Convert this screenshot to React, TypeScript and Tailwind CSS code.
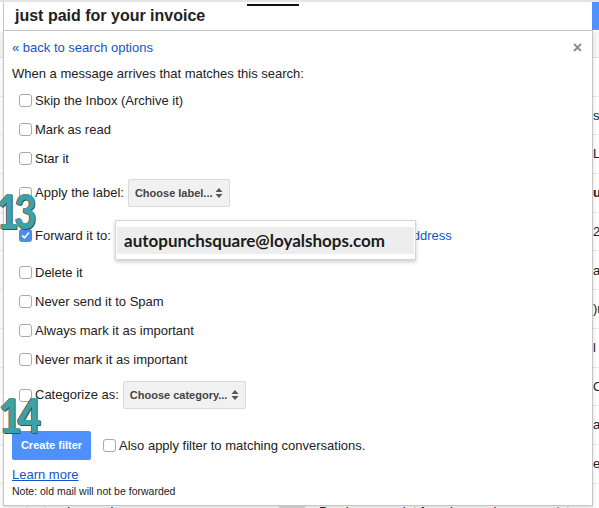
import React from "react";

const Box = ({ checked }: { checked?: boolean }) =>
  checked ? (
    <span className="w-[13px] h-[13px] rounded-[3px] bg-[#4a8fe7] flex items-center justify-center shrink-0">
      <svg width="9" height="9" viewBox="0 0 9 9">
        <path d="M1.5 4.8 L3.6 6.8 L7.6 2" stroke="#fff" strokeWidth="1.6" fill="none" strokeLinecap="round" strokeLinejoin="round" />
      </svg>
    </span>
  ) : (
    <span className="block w-[13px] h-[13px] rounded-[3px] border border-[#a9a9a9] bg-white shrink-0" />
  );

const Arrows = () => (
  <svg width="8" height="12" viewBox="0 0 8 12" className="shrink-0">
    <path d="M4 1 L7.5 5 L0.5 5 Z" fill="#555" />
    <path d="M4 11 L7.5 7 L0.5 7 Z" fill="#555" />
  </svg>
);

const Select = ({ label, w }: { label: string; w: string }) => (
  <div className={`h-[28px] ${w} bg-[#f1f1f1] border border-[#d9d9d9] rounded-[2px] flex items-center justify-between pl-[6px] pr-[6px] text-[11px] font-bold text-[#444]`}>
    <span>{label}</span>
    <Arrows />
  </div>
);

const Row = ({ text, h, checked, children }: { text: string; h: string; checked?: boolean; children?: React.ReactNode }) => (
  <div className={`${h} flex items-center pl-[7px]`}>
    <Box checked={checked} />
    <span className="ml-[3px] text-[13px] text-[#222]">{text}</span>
    {children}
  </div>
);

const bgRows = ["", "sc", "L", "ul", "2(", "a", ")r", "l", "O", "a", "e"];

export default function App() {
  return (
    <div className="relative w-[599px] h-[508px] overflow-hidden bg-white text-[#222] [font-family:'Liberation_Sans',Arial,sans-serif]">
      {/* search bar */}
      <div className="flex h-[31px] border-t-2 border-[#e4e4e4]">
        <div className="ml-[3px] flex-1 border-l border-b border-[#c8c8c8] flex items-center pl-[11px] text-[16px] font-bold text-[#222]">
          just paid for your invoice
        </div>
        <div className="w-[7px] h-[28px] bg-[#4d90fe]" />
      </div>
      {/* background list */}
      <div className="flex flex-col">
        <div className="h-[27px] bg-[#f7f7f7] border-b border-[#e0e0e0]" />
        {bgRows.map((t, i) => (
          <div key={i} className={`h-[38.7px] border-b border-[#e8e8e8] flex items-center pl-[593px] text-[13px] ${t === "ul" ? "font-bold" : ""} whitespace-nowrap`}>
            {t}
          </div>
        ))}
        <div className="h-[38px] flex items-start text-[13px] leading-[16px] whitespace-nowrap">
          <span className="w-[26px]" />
          <span className="w-[20px] h-[38px] border-l border-r border-[#e0e0e0]" />
          <span className="ml-[21px] w-[212px] pt-[20px]">Lazaro Lazaro</span>
          <span className="mt-[20px] w-[26px] h-[14px] bg-[#ddd]" />
          <span className="ml-[14px] pt-[20px]">Purchase receipt from Lazaro Lazaro</span>
          <span className="ml-[13px] pt-[20px] text-[#777]">misty</span>
        </div>
      </div>

      {/* dialog */}
      <div className="absolute left-[3px] top-[30px] w-[590px] h-[476px] bg-white border border-[#c6c6c6] shadow-[0_2px_4px_rgba(0,0,0,0.15)] pl-[8px] pr-[10px]">
        <div className="flex justify-between items-center h-[30px] pt-[3px]">
          <a className="text-[13px] text-[#15c]">« back to search options</a>
          <span className="text-[16px] font-bold text-[#888] mr-[0px]">×</span>
        </div>
        <div className="h-[25px] flex items-center text-[13px]">When a message arrives that matches this search:</div>
        <Row text="Skip the Inbox (Archive it)" h="h-[29px]" />
        <Row text="Mark as read" h="h-[29px]" />
        <Row text="Star it" h="h-[29px]" />
        <Row text="Apply the label:" h="h-[40px]">
          <div className="ml-[4px]">
            <Select label="Choose label..." w="w-[102px]" />
          </div>
        </Row>
        <Row text="Forward it to:" h="h-[45px]" checked>
          <div className="ml-[5px] h-[24px] w-[195px] border border-[#4d90fe] rounded-[2px] bg-[#f1f1f1]" />
          <a className="ml-[5px] text-[13px] text-[#15c]">add forwarding address</a>
        </Row>
        <Row text="Delete it" h="h-[29px]" />
        <Row text="Never send it to Spam" h="h-[29px]" />
        <Row text="Always mark it as important" h="h-[29px]" />
        <Row text="Never mark it as important" h="h-[29px]" />
        <Row text="Categorize as:" h="h-[42px]">
          <div className="ml-[4px]">
            <Select label="Choose category..." w="w-[123px]" />
          </div>
        </Row>
        <div className="flex items-center mt-[15px]">
          <button className="w-[79px] h-[29px] bg-[#4d90fe] rounded-[2px] text-white text-[11px] font-bold">Create filter</button>
          <span className="ml-[12px]"><Box /></span>
          <span className="ml-[3px] text-[13px]">Also apply filter to matching conversations.</span>
        </div>
        <a className="block mt-[7px] text-[13px] text-[#15c] underline leading-[16px]">Learn more</a>
        <div className="text-[10.5px] leading-[16px] text-[#222]">Note: old mail will not be forwarded</div>

        {/* email popup */}
        <div className="absolute left-[111px] top-[189px] w-[301px] h-[40px] bg-white border border-[#d4d4d4] shadow-[0_2px_4px_rgba(0,0,0,0.2)] pt-[6px] px-[1px]">
          <div className="h-[27px] bg-[#ededed] flex items-center pl-[7px] text-[17px] font-bold text-[#1c1c1c] [font-family:Lato,sans-serif]">
            autopunchsquare@loyalshops.com
          </div>
        </div>
      </div>

      {/* annotation line */}
      <div className="absolute left-[247px] top-[4px] w-[52px] h-[2px] bg-[#111]" />

      {/* annotation numbers */}
      <div className="absolute left-[-3px] top-[181px] text-[47px] leading-[60px] font-black text-[#3da2a8] tracking-[-5px] [font-family:Lato,sans-serif] [text-shadow:1px_1px_0_#4a4a4a,-1px_0_0_#4a4a4a] scale-x-[0.8] origin-left">
        13
      </div>
      <div className="absolute left-[-1px] top-[385px] text-[47px] leading-[60px] font-black text-[#3da2a8] tracking-[-5px] [font-family:Lato,sans-serif] [text-shadow:1px_1px_0_#4a4a4a,-1px_0_0_#4a4a4a] scale-x-[0.85] origin-left">
        14
      </div>
    </div>
  );
}
